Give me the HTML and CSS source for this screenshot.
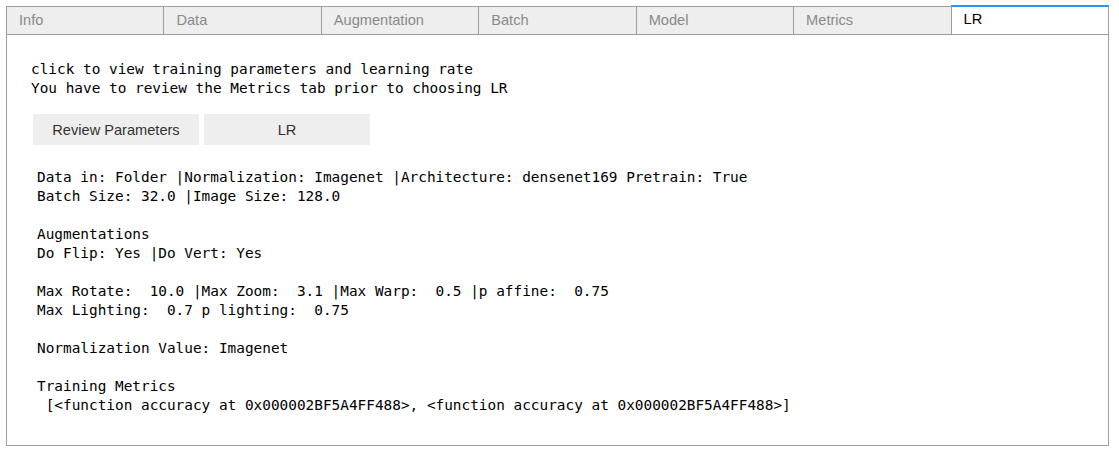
FILE: index.html
```html
<!DOCTYPE html>
<html>
<head>
<meta charset="utf-8">
<link rel="stylesheet" href="styles.css">
</head>
<body>
<div class="widget">
  <div class="tabs">
    <div class="tab">Info</div>
    <div class="tab">Data</div>
    <div class="tab">Augmentation</div>
    <div class="tab">Batch</div>
    <div class="tab">Model</div>
    <div class="tab">Metrics</div>
    <div class="tab active">LR</div>
  </div>
  <div class="panel">
    <pre class="intro">click to view training parameters and learning rate
You have to review the Metrics tab prior to choosing LR</pre>
    <div class="buttons">
      <button class="btn">Review Parameters</button>
      <button class="btn">LR</button>
    </div>
    <pre class="output">Data in: Folder |Normalization: Imagenet |Architecture: densenet169 Pretrain: True
Batch Size: 32.0 |Image Size: 128.0

Augmentations
Do Flip: Yes |Do Vert: Yes

Max Rotate:  10.0 |Max Zoom:  3.1 |Max Warp:  0.5 |p affine:  0.75
Max Lighting:  0.7 p lighting:  0.75

Normalization Value: Imagenet

Training Metrics
 [&lt;function accuracy at 0x000002BF5A4FF488&gt;, &lt;function accuracy at 0x000002BF5A4FF488&gt;]</pre>
  </div>
</div>
</body>
</html>
```

FILE: styles.css
```css
html, body {
  margin: 0;
  padding: 0;
  background: #ffffff;
}

.widget {
  padding: 6px 0 0 6px;
  width: 1103px;
  font-family: "Liberation Sans", Arial, sans-serif;
}

.tabs {
  display: flex;
  height: 28px;
  position: relative;
  z-index: 1;
}

.tab {
  flex: 1 1 0;
  box-sizing: border-box;
  height: 28px;
  background: #eeeeee;
  border: 1px solid #9e9e9e;
  border-bottom: none;
  border-right: none;
  color: #8a8a8a;
  font-size: 14.6px;
  line-height: 27px;
  padding-left: 12px;
  white-space: nowrap;
  overflow: hidden;
}

.tab.active {
  background: #ffffff;
  color: #000000;
  border-top: 2px solid #2196f3;
  border-right: 1px solid #9e9e9e;
  height: 29px;
  line-height: 25px;
  margin-top: -1px;
}

.panel {
  box-sizing: border-box;
  border: 1px solid #9e9e9e;
  height: 412px;
  padding: 25px 0 0 24px;
}

pre {
  margin: 0;
  font-family: "DejaVu Sans Mono", "Liberation Mono", monospace;
  font-size: 14.4px;
  line-height: 19px;
  color: #000000;
}

.buttons {
  display: flex;
  gap: 5px;
  margin: 16px 0 0 2px;
}

.btn {
  width: 166px;
  height: 31px;
  border: none;
  background: #eeeeee;
  font-family: "Liberation Sans", Arial, sans-serif;
  font-size: 14.6px;
  color: #333333;
  padding: 0;
}

.output {
  margin: 23px 0 0 6px;
}
```
